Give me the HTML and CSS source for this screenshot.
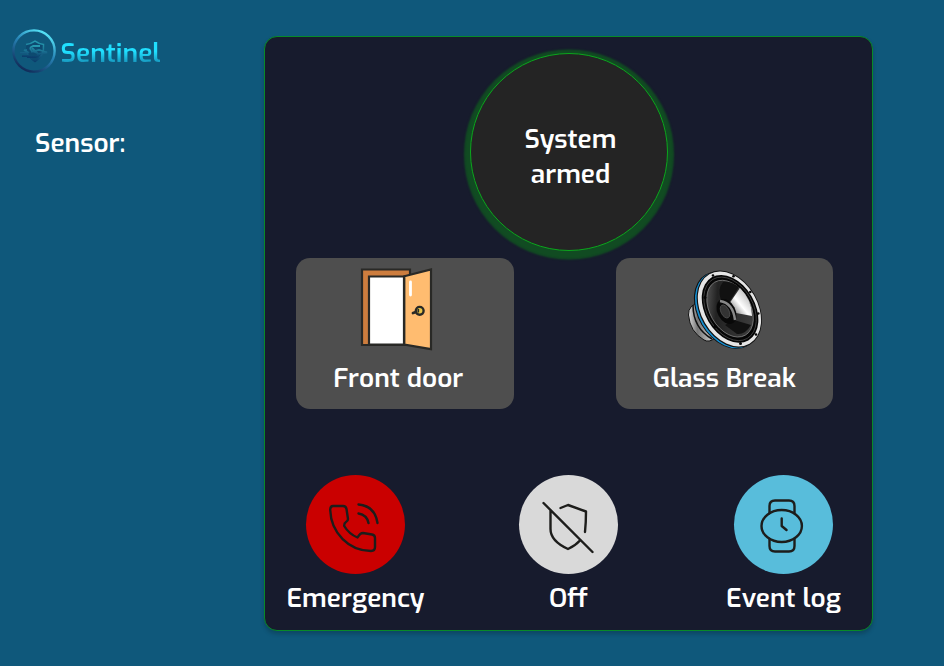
FILE: index.html
```html
<!DOCTYPE html>
<html lang="en">
<head>
<meta charset="utf-8">
<title>Sentinel</title>
<link rel="stylesheet" href="styles.css">
</head>
<body>
<div class="app">
  <aside class="sidebar">
    <div class="brand">
      <svg class="brand-mark" viewBox="0 0 46 46">
        <defs>
          <linearGradient id="ring" x1="0.8" y1="0" x2="0.25" y2="1"><stop offset="0" stop-color="#5cefff"/><stop offset=".45" stop-color="#2783b5"/><stop offset="1" stop-color="#102653"/></linearGradient>
          <linearGradient id="mark" x1="0.5" y1="0" x2="0.4" y2="1"><stop offset="0" stop-color="#269ab0"/><stop offset="1" stop-color="#0b3d6b"/></linearGradient>
        </defs>
        <circle cx="23" cy="23" r="20.6" fill="none" stroke="url(#ring)" stroke-width="2.4"/>
        <path d="M15 16.5Q20 16 24 13.2Q28 16 32.5 16.5Q33.5 28 24 33.5Q16 29 15 21" fill="#0d4a70" stroke="url(#mark)" stroke-width="1.5"/>
        <path d="M29 18H22Q17 20 21 23L26 25Q29 28 24 29H16M20 24L28 22L36 24.5L28 26M9 25H16M11 28H19M13 22L18 25M21 20L28 27" fill="none" stroke="url(#mark)" stroke-width="1.8"/>
      </svg>
      <span class="brand-name">Sentinel</span>
    </div>
    <h1 class="text sensor">Sensor:</h1>
  </aside>
  <main class="panel">
    <div class="status text"><span>System</span><span>armed</span></div>
    <section class="cards">
      <article class="card">
        <svg class="card-icon door" viewBox="0 0 90 95">
          <path d="M12 9.5H60V85H12Z" fill="#cd7d3e" stroke="#292926" stroke-width="2.2"/>
          <path d="M19 16.5H54V84.5H19Z" fill="#fff" stroke="#292926" stroke-width="2.2"/>
          <path d="M54.3 16.3L81 9.5V89.2L54.3 84.5Z" fill="#ffbc70" stroke="#292926" stroke-width="2.2"/>
          <path d="M60.5 22V35" stroke="#fff" stroke-width="2.8" stroke-linecap="round"/>
          <path d="M63 53L69 51" stroke="#292926" stroke-width="2.8" stroke-linecap="round"/>
          <circle cx="69.7" cy="50.8" r="3.9" fill="#e8c447" stroke="#292926" stroke-width="2.4"/>
          <path d="M68.3 49V52.5" stroke="#292926" stroke-width="1.7"/>
        </svg>
        <span class="text">Front door</span>
      </article>
      <article class="card">
        <svg class="card-icon" viewBox="0 0 90 95">
          <defs>
            <linearGradient id="magnet"><stop offset="0" stop-color="#ddd"/><stop offset=".25" stop-color="#777"/><stop offset=".6" stop-color="#bbb"/><stop offset="1" stop-color="#333"/></linearGradient>
            <linearGradient id="cone" x1="0" y1="0" x2="1" y2="1"><stop offset="0" stop-color="#777"/><stop offset=".3" stop-color="#222"/><stop offset="1" stop-color="#444"/></linearGradient>
            <linearGradient id="glint" x1="0" y1="1" x2="1" y2="0"><stop offset="0" stop-color="#444"/><stop offset=".45" stop-color="#fff"/><stop offset="1" stop-color="#999"/></linearGradient>
          </defs>
          <path d="M21 42Q9 45 9.5 55Q11 72 25 80Q30 83 36 78L45 73Z" fill="url(#magnet)" stroke="#111" stroke-width="1"/>
          <path d="M14 45Q14 68 33 79" fill="none" stroke="#111" stroke-width="1.5"/>
          <g transform="rotate(-30 49.5 50)">
            <ellipse cx="47.3" cy="49.2" rx="28.6" ry="41.4" fill="#111"/>
            <ellipse cx="48.1" cy="49.4" rx="28.4" ry="40.8" fill="#168ed0"/>
            <ellipse cx="50.6" cy="49.6" rx="29.2" ry="41.2" fill="#111"/>
            <ellipse cx="50.8" cy="49.6" rx="28.2" ry="40.2" fill="#e5e5e5"/>
            <ellipse cx="51.4" cy="49.8" rx="25" ry="36.5" fill="#050505"/>
            <ellipse cx="51.4" cy="49.8" rx="23" ry="34.2" fill="none" stroke="#444" stroke-width=".8"/>
            <ellipse cx="51.5" cy="49.6" rx="20.3" ry="30.6" fill="url(#cone)" stroke="#999" stroke-width=".6"/>
          </g>
          <path d="M44 22Q38 29 42 40L49 44L60 27Q52 21 44 22Z" fill="#111"/>
          <path d="M61 28L50 44L57 53L73 56Q73 40 61 28Z" fill="url(#glint)"/>
          <path d="M55 60L72 65Q66 75 58 74L46 65Z" fill="#111"/>
          <ellipse cx="47.5" cy="51.5" rx="9" ry="13.3" transform="rotate(-27 47.5 51.5)" fill="#080808"/>
          <path d="M41 41Q54 43 56 60" fill="none" stroke="#888" stroke-width="2.4"/>
          <ellipse cx="46" cy="51.5" rx="4" ry="7" transform="rotate(-27 46 51.5)" fill="#333" stroke="#555" stroke-width=".7"/>
          <g fill="#050505"><circle cx="34" cy="15.5" r="1.3"/><circle cx="54.5" cy="16.2" r="1.3"/><circle cx="71.3" cy="32" r="1.3"/><circle cx="79.3" cy="53.5" r="1.3"/><circle cx="77" cy="74.5" r="1.3"/><circle cx="61.5" cy="83.5" r="1.5"/><circle cx="36" cy="66.5" r="1.5"/><circle cx="26" cy="37.5" r="1.5"/></g>
        </svg>
        <span class="text">Glass Break</span>
      </article>
    </section>
    <nav class="actions">
      <div class="action">
        <span class="disc red"><svg viewBox="0 0 99 99"><path d="M27 31H37Q40 31 40.5 34L42 44Q42 46 40 47Q38 48 38.2 51Q43 59 51.5 62.5Q54 58 57 58L66 59.5Q69 60 69 63V72Q69 76 65 76C43 76 25 58 24.2 35Q24.2 31 27 31ZM52.5 29.5Q69 31 71.5 48M52.5 38.5Q61 40 62.5 48"/></svg></span>
        <span class="text">Emergency</span>
      </div>
      <div class="action">
        <span class="disc grey"><svg viewBox="0 0 99 99"><path d="M24.5 28L73.5 77M41.5 33L49 30L67 36.5Q67 47 66 57M31.5 35V54Q31.5 66 49 74Q56 71 61.5 65"/></svg></span>
        <span class="text">Off</span>
      </div>
      <div class="action">
        <span class="disc blue"><svg viewBox="0 0 99 99"><ellipse cx="47.7" cy="51" rx="20.2" ry="16"/><path d="M35.5 38V31Q35.5 25.5 41 25.5H55Q60.5 25.5 60.5 31V38M35.5 64V71Q35.5 76.5 41 76.5H55Q60.5 76.5 60.5 71V64M47.7 43.5V51L52.5 55"/></svg></span>
        <span class="text">Event log</span>
      </div>
    </nav>
  </main>
</div>
</body>
</html>
```
FILE: styles.css
```css
* { box-sizing: border-box; }
body { margin: 0; background: #0f587b; overflow: hidden; }
.app { display: flex; width: 944px; height: 666px; background: #0f587b; }
.sidebar { width: 264px; padding: 28px 0 0 11px; }
.brand { display: flex; align-items: center; height: 46px; gap: 3.5px; }
.brand-mark { width: 46px; height: 46px; flex: none; }
.brand-name {
  padding-top: 5px;
  font: 600 26.4px/34px Exo, "Exo 2", Roboto, sans-serif;
  background: linear-gradient(#20dfff 50%, #168db4 82%);
  -webkit-background-clip: text;
  background-clip: text;
  color: transparent;
}
.text {
  margin: 0;
  font: 600 26.3px/35px Exo, "Exo 2", Roboto, sans-serif;
  color: #fff;
  white-space: nowrap;
}
.sensor { padding: 51.5px 0 0 24px; }
.panel {
  display: flex;
  flex-direction: column;
  align-items: center;
  width: 609px;
  height: 595px;
  margin-top: 36px;
  padding-top: 16px;
  background: #171b2d;
  border: 1px solid #088a28;
  border-radius: 13px;
  box-shadow: 0 3px 4px rgba(0, 0, 0, .2);
}
.status {
  display: flex;
  flex-direction: column;
  align-items: center;
  justify-content: center;
  width: 198px;
  height: 198px;
  margin-left: 1px;
  padding: 10px 0 0 3px;
  background: #242424;
  border: 1px solid #0ba61c;
  border-radius: 50%;
  box-shadow: 0 2.5px 2px 6px #114b22;
}
.cards { display: flex; gap: 102px; width: 100%; padding: 7px 0 0 31px; }
.card {
  display: flex;
  flex-direction: column;
  align-items: center;
  width: 217.5px;
  height: 151px;
  padding: 2px 13px 0 0;
  background: #4e4e4e;
  border-radius: 14px;
}
.card:last-child { padding-right: 0; }
.card-icon { width: 90px; height: 95px; flex: none; }
.door { margin-right: 6px; }
.card .text { margin-top: 6px; }
.actions { display: flex; justify-content: space-between; width: 100%; padding: 66px 39px 0 41px; }
.action { display: flex; flex-direction: column; align-items: center; width: 99px; }
.action:nth-child(2) { margin-left: -2px; }
.disc { width: 99px; height: 99px; flex: none; border-radius: 50%; }
.disc svg {
  display: block;
  width: 99px;
  height: 99px;
  fill: none;
  stroke: #1d1d1b;
  stroke-width: 2.4;
  stroke-linecap: round;
  stroke-linejoin: round;
}
.action .text { margin-top: 7px; }
.red { background: #ca0000; }
.grey { background: #d9d9d9; }
.blue { background: #58bddb; }
```
